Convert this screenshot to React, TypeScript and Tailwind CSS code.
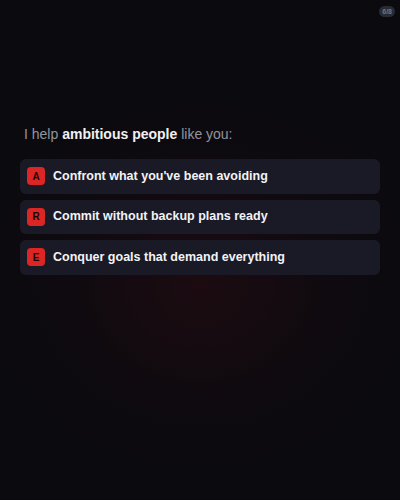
const items = [
  { letter: 'A', text: "Confront what you've been avoiding" },
  { letter: 'R', text: 'Commit without backup plans ready' },
  { letter: 'E', text: 'Conquer goals that demand everything' },
]

export default function App() {
  return (
    <div
      className="relative min-h-[500px] w-full bg-[#0a0a0f] font-['Liberation_Sans',Arial,sans-serif]"
      style={{ backgroundImage: 'radial-gradient(ellipse 65% 45% at 50% 57%, rgba(130,20,30,0.15) 0%, rgba(70,12,20,0.08) 50%, rgba(10,10,15,0) 100%)' }}
    >
      {/* step counter */}
      <div className="absolute right-[5px] top-[6px] flex h-[11px] items-center rounded-full bg-[#2a2a33] px-[3px] text-[7px] font-bold leading-none text-[#75757f]">
        6/8
      </div>

      <div className="px-5 pt-[124px]">
        <p className="mb-[15px] pl-1 text-[14px] leading-5 text-[#94949c]">
          I help <span className="font-bold text-[#f1f1f4]">ambitious people</span> like you:
        </p>

        <div className="flex flex-col gap-[6px]">
          {items.map((item) => (
            <div
              key={item.letter}
              className="flex h-[34.5px] items-center gap-2 rounded-md bg-[#1a1a26] pl-[7px]"
            >
              <span className="flex h-[18px] w-[18px] shrink-0 items-center justify-center rounded-[4px] bg-[#dc2626] text-[10px] font-bold text-[#1a0505]">
                {item.letter}
              </span>
              <span className="text-[12.5px] font-bold text-[#f3f3f6]">{item.text}</span>
            </div>
          ))}
        </div>
      </div>
    </div>
  )
}
